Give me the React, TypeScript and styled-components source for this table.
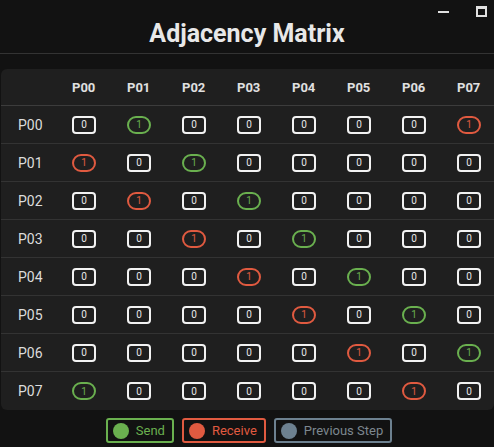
import React from "react";
import styled, { createGlobalStyle } from "styled-components";

const GREEN = "#6ab04f";
const RED = "#e05a40";
const GREY = "#6d8190";

const Global = createGlobalStyle`
  html, body { margin: 0; padding: 0; background: #121212; }
  body { font-family: Roboto, "Noto Sans", sans-serif; color: #e6e6e6; }
  * { box-sizing: border-box; }
`;

const Page = styled.div`
  width: 494px;
  height: 447px;
  background: #121212;
  display: flex;
  flex-direction: column;
  overflow: hidden;
`;

const ControlBar = styled.div`
  height: 20px;
  display: flex;
  justify-content: flex-end;
  align-items: flex-start;
  gap: 27px;
  padding: 6px 7px 0 0;
`;

const Minimize = styled.div`
  width: 11px;
  height: 2px;
  margin-top: 5px;
  background: #e0e0e0;
`;

const Maximize = styled.div`
  width: 11px;
  height: 11px;
  border: 2px solid #e0e0e0;
  border-top-width: 3px;
`;

const Title = styled.h1`
  margin: 0;
  height: 34px;
  font-size: 25px;
  font-weight: 700;
  line-height: 28px;
  text-align: center;
  color: #e8e8e8;
  border-bottom: 1px solid #333;
`;

const TableCard = styled.div`
  margin: 15px 0 0 1px;
  width: 493px;
  background: #1f1f1f;
  border-radius: 6px 0 6px 6px;
  display: grid;
  grid-template-columns: 56px repeat(7, 55px) 1fr;
`;

const HeadCell = styled.div`
  height: 37px;
  padding-left: 15px;
  display: flex;
  align-items: center;
  font-size: 13px;
  font-weight: 700;
  color: #e0e0e0;
  border-bottom: 1px solid #3c3c3c;
`;

const RowLabel = styled.div<{ $last?: boolean }>`
  height: 38px;
  padding-left: 17px;
  display: flex;
  align-items: center;
  font-size: 14px;
  color: #dcdcdc;
  border-bottom: ${(p) => (p.$last ? "none" : "1px solid #333")};
`;

const Cell = styled.div<{ $last?: boolean }>`
  height: 38px;
  padding-left: 15px;
  display: flex;
  align-items: center;
  border-bottom: ${(p) => (p.$last ? "none" : "1px solid #333")};
`;

const Value = styled.div<{ $kind: "none" | "send" | "recv" }>`
  width: 24px;
  height: 18px;
  border: 2px solid
    ${(p) => (p.$kind === "send" ? GREEN : p.$kind === "recv" ? RED : "#f2f2f2")};
  border-radius: ${(p) => (p.$kind === "none" ? "4px" : "9px")};
  display: flex;
  align-items: center;
  justify-content: center;
  font-size: 10px;
  color: ${(p) => (p.$kind === "send" ? GREEN : p.$kind === "recv" ? RED : "#e8e8e8")};
`;

const Legend = styled.div`
  display: flex;
  justify-content: center;
  gap: 8px;
  margin-top: 8px;
  padding-left: 4px;
`;

const LegendItem = styled.div<{ $color: string; $text: string }>`
  height: 25px;
  display: flex;
  align-items: center;
  gap: 7px;
  padding: 0 7px 0 5px;
  border: 2px solid ${(p) => p.$color};
  border-radius: 3px;
  font-size: 13px;
  color: ${(p) => p.$text};
`;

const Dot = styled.span<{ $color: string }>`
  width: 16px;
  height: 16px;
  border-radius: 50%;
  background: ${(p) => p.$color};
`;

const N = 8;
const labels = Array.from({ length: N }, (_, i) => `P0${i}`);

function kindFor(r: number, c: number): "none" | "send" | "recv" {
  if (c === (r + 1) % N) return "send";
  if (c === (r + N - 1) % N) return "recv";
  return "none";
}

export default function App() {
  return (
    <Page>
      <Global />
      <ControlBar>
        <Minimize />
        <Maximize />
      </ControlBar>
      <Title>Adjacency Matrix</Title>
      <TableCard>
        <HeadCell />
        {labels.map((l) => (
          <HeadCell key={l}>{l}</HeadCell>
        ))}
        {labels.map((rl, r) => (
          <React.Fragment key={rl}>
            <RowLabel $last={r === N - 1}>{rl}</RowLabel>
            {labels.map((cl, c) => {
              const k = kindFor(r, c);
              return (
                <Cell key={cl} $last={r === N - 1}>
                  <Value $kind={k}>{k === "none" ? "0" : "1"}</Value>
                </Cell>
              );
            })}
          </React.Fragment>
        ))}
      </TableCard>
      <Legend>
        <LegendItem $color={GREEN} $text={GREEN}>
          <Dot $color={GREEN} />
          Send
        </LegendItem>
        <LegendItem $color={RED} $text={RED}>
          <Dot $color={RED} />
          Receive
        </LegendItem>
        <LegendItem $color={GREY} $text="#7d878f">
          <Dot $color={GREY} />
          Previous Step
        </LegendItem>
      </Legend>
    </Page>
  );
}
